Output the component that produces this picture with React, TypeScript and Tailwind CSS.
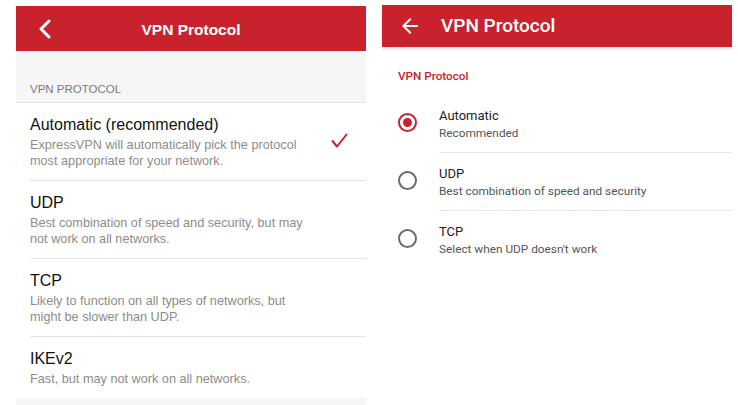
import { useState } from 'react';

const iosFont = { fontFamily: '"Liberation Sans", Arial, sans-serif' };
const androidFont = { fontFamily: 'Roboto, "Noto Sans", sans-serif' };

const iosOptions = [
  { id: 'auto', title: 'Automatic (recommended)', desc: ['ExpressVPN will automatically pick the protocol', 'most appropriate for your network.'] },
  { id: 'udp', title: 'UDP', desc: ['Best combination of speed and security, but may', 'not work on all networks.'] },
  { id: 'tcp', title: 'TCP', desc: ['Likely to function on all types of networks, but', 'might be slower than UDP.'] },
  { id: 'ikev2', title: 'IKEv2', desc: ['Fast, but may not work on all networks.'] },
];

const androidOptions = [
  { id: 'auto', title: 'Automatic', desc: 'Recommended' },
  { id: 'udp', title: 'UDP', desc: 'Best combination of speed and security' },
  { id: 'tcp', title: 'TCP', desc: "Select when UDP doesn't work" },
];

const IosPanel = () => {
  const [selected, setSelected] = useState('auto');

  return (
    <div className="w-[350px] mt-[1px] flex flex-col bg-white" style={iosFont}>
      <div className="h-[45px] shrink-0 bg-[#c8232c] relative flex items-center justify-center pt-[3px]">
        <svg className="absolute left-[22px] top-[13px]" width="14" height="20" viewBox="0 0 14 20" fill="none">
          <path d="M11 2 L3 10 L11 18" stroke="white" strokeWidth="3" strokeLinecap="round" strokeLinejoin="round" />
        </svg>
        <h1 className="text-white text-[15.5px] font-bold">VPN Protocol</h1>
      </div>

      <div className="h-[52px] shrink-0 bg-[#f6f6f6] border-b border-[#e3e3e3] flex items-end pl-[14px] pb-[4px]">
        <span className="text-[11.5px] text-[#7a7a7a]">VPN PROTOCOL</span>
      </div>

      <div className="pl-[14px] shrink-0">
        {iosOptions.map((opt, i) => (
          <button
            key={opt.id}
            onClick={() => setSelected(opt.id)}
            className={`w-full flex items-center text-left pt-[12px] pb-[11px] pr-[18px] ${i < iosOptions.length - 1 ? 'border-b border-[#e4e4e4]' : ''}`}
          >
            <div className="flex-1">
              <div className="text-[16px] leading-[20px] text-[#111]">{opt.title}</div>
              <div className="mt-[2px] text-[12.7px] leading-[16px] text-[#8c8c8c]">
                {opt.desc.map((line) => (
                  <div key={line}>{line}</div>
                ))}
              </div>
            </div>
            {selected === opt.id && (
              <svg width="17" height="16" viewBox="0 0 17 16" fill="none" className="mb-[2px]">
                <path d="M1.5 8 L6 13.5 L15.5 1.5" stroke="#c8232c" strokeWidth="2" strokeLinecap="round" strokeLinejoin="round" />
              </svg>
            )}
          </button>
        ))}
      </div>

      <div className="flex-1 bg-[#f6f6f6] min-h-[6px]" />
    </div>
  );
};

const AndroidPanel = () => {
  const [selected, setSelected] = useState('auto');

  return (
    <div className="w-[350px] flex flex-col bg-white" style={androidFont}>
      <div className="h-[42px] shrink-0 bg-[#c8232c] flex items-center shadow-[0_2px_3px_rgba(0,0,0,0.12)]">
        <svg className="ml-[16px]" width="24" height="24" viewBox="0 0 24 24" fill="white">
          <path d="M20 11H7.83l5.59-5.59L12 4l-8 8 8 8 1.41-1.41L7.83 13H20v-2z" />
        </svg>
        <h1 className="ml-[19px] text-white text-[19px] font-medium">VPN Protocol</h1>
      </div>

      <div className="pl-[16px] pt-[21px] pb-[9px] text-[11.7px] font-medium text-[#c8232c]">VPN Protocol</div>

      <div>
        {androidOptions.map((opt, i) => (
          <button key={opt.id} onClick={() => setSelected(opt.id)} className="w-full flex items-stretch text-left">
            <div className="w-[57px] flex items-center pl-[16px] pb-[2px]">
              <span
                className={`w-[19px] h-[19px] rounded-full border-2 flex items-center justify-center ${selected === opt.id ? 'border-[#c8232c]' : 'border-[#6b6b6b]'}`}
              >
                {selected === opt.id && <span className="w-[9px] h-[9px] rounded-full bg-[#c8232c]" />}
              </span>
            </div>
            <div className={`flex-1 pt-[13px] pb-[11px] ${i < androidOptions.length - 1 ? 'border-b border-[#e8e8e8]' : ''}`}>
              <div className="text-[13px] leading-[16px] text-[#222]">{opt.title}</div>
              <div className="mt-[1px] text-[11.8px] leading-[16px] text-[#555]">{opt.desc}</div>
            </div>
          </button>
        ))}
      </div>
    </div>
  );
};

export default function App() {
  return (
    <div className="w-[738px] h-[405px] bg-white overflow-hidden flex gap-[16px] pl-[16px] pt-[5px]">
      <IosPanel />
      <AndroidPanel />
    </div>
  );
}
